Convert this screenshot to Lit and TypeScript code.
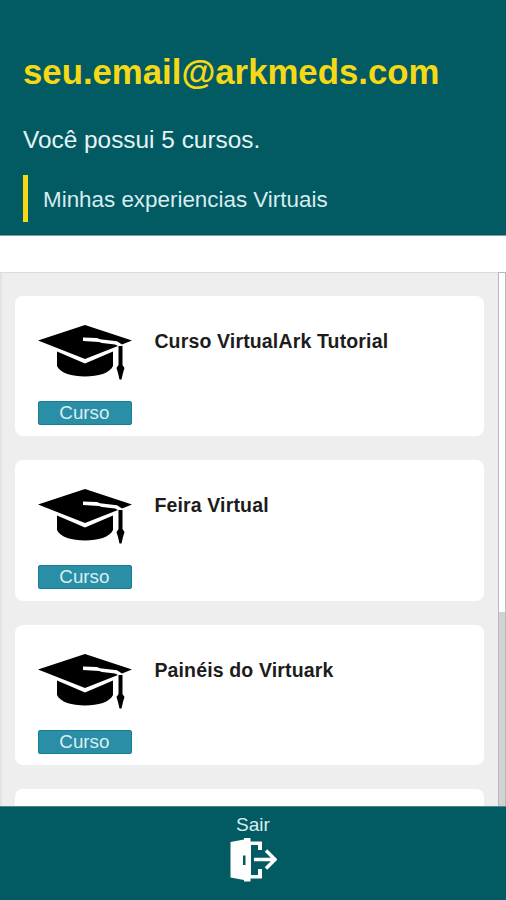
import { LitElement, html, css, nothing } from "lit";
import { customElement, property } from "lit/decorators.js";

@customElement("course-card")
class CourseCard extends LitElement {
  @property() name = "";

  static styles = css`
    :host {
      display: flex;
      flex: none;
      box-sizing: border-box;
      height: 140.4px;
      padding: 29px 23px 0 23px;
      gap: 22px;
      background: #fff;
      border-radius: 8px;
    }
    .media {
      width: 94px;
      flex: none;
      display: flex;
      flex-direction: column;
      gap: 19px;
    }
    .cap {
      display: block;
      width: 94px;
      height: 57px;
    }
    .tag {
      height: 24px;
      box-sizing: border-box;
      line-height: 22px;
      border: 1px solid #167f93;
      border-radius: 2px;
      background: #2a8ea6;
      color: #d9eef3;
      font-size: 18.8px;
      text-align: center;
      padding-right: 2px;
    }
    .name {
      margin: 5px 0 0;
      font-size: 19.5px;
      line-height: 22px;
      letter-spacing: 0.15px;
      font-weight: 700;
      color: #1c1c1c;
      white-space: nowrap;
    }
  `;

  render() {
    if (!this.name) return nothing;
    return html`
      <div class="media">
        <svg class="cap" viewBox="0 0 94 57">
          <path d="M0 15.500 47 0 94 15.500 84 19.500 79 16.200 62 14.300 59 13 45 12.500V16L61 17 64 18 77 19.500 80 21 47 34Z" />
          <path d="M19 26.500 47 38.500 75 26.500V41C72 48 60 51.500 47 51.500S22 48 19 41Z" />
          <path d="M80.500 21H84.500V40L86.500 43 85 48 83.500 54.500H81.500L80 48 78.500 43 80.500 40Z" />
        </svg>
        <div class="tag">Curso</div>
      </div>
      <h2 class="name">${this.name}</h2>
    `;
  }
}

@customElement("app-root")
class AppRoot extends LitElement {
  static styles = css`
    :host {
      display: flex;
      flex-direction: column;
      width: 506px;
      height: 900px;
      overflow: hidden;
      background: #fff;
      font-family: "Liberation Sans", Arial, sans-serif;
    }
    .top {
      flex: none;
      box-sizing: border-box;
      height: 236px;
      padding: 52px 23px 0;
      background: #025b63;
      border-bottom: 1px solid #7d9da1;
    }
    .email {
      margin: 0;
      font-size: 34.75px;
      line-height: 40px;
      color: #f5d916;
      white-space: nowrap;
    }
    .count {
      margin: 34px 0 0;
      font-size: 24.4px;
      line-height: 28px;
      color: #e6f3f5;
    }
    .section {
      margin-top: 21px;
      height: 47px;
      line-height: 49px;
      border-left: 5px solid #f5d916;
      padding-left: 15px;
      font-size: 22.4px;
      color: #d8ecef;
    }
    .list {
      flex: 1;
      min-height: 0;
      margin-top: 36px;
      display: flex;
      background: #eee;
      box-shadow: inset 0 1px #dcdcdc, inset 2px 0 #e3e3e3;
      overflow: hidden;
    }
    .cards {
      flex: 1;
      display: flex;
      flex-direction: column;
      gap: 24px;
      padding: 24px 14px 0 15.400px;
    }
    .track {
      width: 8px;
      flex: none;
      box-sizing: border-box;
      border: solid #b9b9b9;
      border-width: 1px 1px 0 1px;
      background: #fff;
      display: flex;
      align-items: flex-end;
    }
    .thumb {
      width: 100%;
      height: 194px;
      background: #d2d2d2;
    }
    .exit {
      flex: none;
      box-sizing: border-box;
      height: 94px;
      border-top: 1px solid #4d858b;
      background: #025b63;
      display: flex;
      flex-direction: column;
      align-items: center;
      padding-top: 7px;
      font-size: 19px;
      line-height: 22px;
      color: #d8ecef;
    }
    .door {
      width: 48px;
      height: 44px;
      margin-top: 1.500px;
    }
  `;

  render() {
    const courses = ["Curso VirtualArk Tutorial", "Feira Virtual", "Painéis do Virtuark", ""];
    return html`
      <header class="top">
        <h1 class="email">seu.email@arkmeds.com</h1>
        <p class="count">Você possui 5 cursos.</p>
        <div class="section">Minhas experiencias Virtuais</div>
      </header>
      <main class="list">
        <div class="cards">
          ${courses.map((c) => html`<course-card .name=${c}></course-card>`)}
        </div>
        <div class="track"><div class="thumb"></div></div>
      </main>
      <footer class="exit">
        <span>Sair</span>
        <svg class="door" viewBox="0 0 48 44">
          <path fill="#fff" fill-rule="evenodd" d="M1.500 4 15 1.500V0H21.500V3.500H33V12H29V7H22V37H29V31H33V40.500H21.500V43.500H15V42L1.500 39.500ZM14 17.500V27H16.500V17.500Z" />
          <path fill="none" stroke="#fff" stroke-width="3.500" d="M25 21.500H45M37 12.500 46 21.500 37 30.500" />
        </svg>
      </footer>
    `;
  }
}
